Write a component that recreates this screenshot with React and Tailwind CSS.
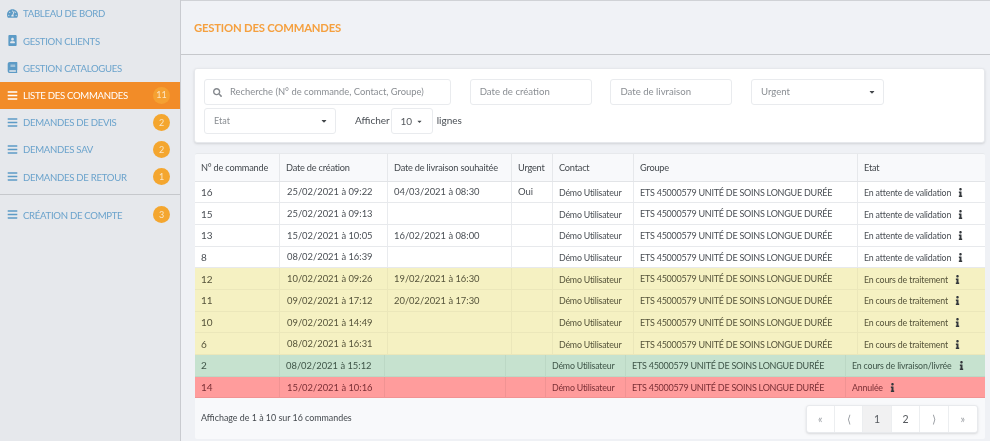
import React from 'react';
import { FaTachometerAlt, FaPortrait, FaBook, FaBars, FaInfo, FaSearch, FaCaretDown } from 'react-icons/fa';

const nav = [
  { label: 'TABLEAU DE BORD', Icon: FaTachometerAlt },
  { label: 'GESTION CLIENTS', Icon: FaPortrait },
  { label: 'GESTION CATALOGUES', Icon: FaBook },
  { label: 'LISTE DES COMMANDES', Icon: FaBars, badge: 11, active: true },
  { label: 'DEMANDES DE DEVIS', Icon: FaBars, badge: 2 },
  { label: 'DEMANDES SAV', Icon: FaBars, badge: 2 },
  { label: 'DEMANDES DE RETOUR', Icon: FaBars, badge: 1 },
];

const G = 'ETS 45000579 UNITÉ DE SOINS LONGUE DURÉE';
const rows = [
  ['16', '25/02/2021 à 09:22', '04/03/2021 à 08:30', 'Oui', 'En attente de validation', 'w'],
  ['15', '25/02/2021 à 09:13', '', '', 'En attente de validation', 'w'],
  ['13', '15/02/2021 à 10:05', '16/02/2021 à 08:00', '', 'En attente de validation', 'w'],
  ['8', '08/02/2021 à 16:39', '', '', 'En attente de validation', 'w'],
  ['12', '10/02/2021 à 09:26', '19/02/2021 à 16:30', '', 'En cours de traitement', 'y'],
  ['11', '09/02/2021 à 17:12', '20/02/2021 à 17:30', '', 'En cours de traitement', 'y'],
  ['10', '09/02/2021 à 14:49', '', '', 'En cours de traitement', 'y'],
  ['6', '08/02/2021 à 16:31', '', '', 'En cours de traitement', 'y'],
  ['2', '08/02/2021 à 15:12', '', '', 'En cours de livraison/livrée', 'g'],
  ['14', '15/02/2021 à 10:16', '', '', 'Annulée', 'r'],
];

const rowStyle = {
  w: 'bg-white border-[#e7e9ec] text-[#4a4f55] divide-[#e9ebee]',
  y: 'bg-[#f5f1c2] border-[#ebe7ba] text-[#55533a] divide-[#ebe7ba]',
  g: 'bg-[#c6e2cf] border-[#bcd8c5] text-[#3f5548] divide-[#bcd8c5]',
  r: 'bg-[#ff9c9c] border-[#f19393] text-[#7a2f35] divide-[#f19393]',
};

const wideCols = 'grid-cols-[85px_108px_124px_41px_81px_224px_1fr]';
const narrowCols = 'grid-cols-[85px_105px_121px_40px_80px_220px_1fr]';

function Cell({ children, className = '' }) {
  return <div className={`flex items-center pl-[6px] pt-[1px] overflow-hidden whitespace-nowrap ${className}`}>{children}</div>;
}

function Row({ r }) {
  const [id, created, delivery, urgent, state, kind] = r;
  const narrow = kind === 'g' || kind === 'r';
  return (
    <div className={`grid h-[21.7px] border-b divide-x ${narrow ? narrowCols : wideCols} ${rowStyle[kind]}`}>
      <Cell className="text-[10px]">{id}</Cell>
      <Cell className={`text-[9.4px] ${kind === 'g' ? 'pl-[5px]' : 'pl-[7px]'}`}>{created}</Cell>
      <Cell className="text-[9.4px]">{delivery}</Cell>
      <Cell className="text-[9.5px]">{urgent}</Cell>
      <Cell className="text-[8.8px] tracking-[-0.2px]">Démo Utilisateur</Cell>
      <Cell className="text-[9px] tracking-[-0.25px]">{G}</Cell>
      <Cell className="text-[8.8px] tracking-[-0.17px]">
        <span>{state}</span>
        <FaInfo className="ml-[5px] w-[9px] h-[9px] text-[#33373b]" />
      </Cell>
    </div>
  );
}

export default function App() {
  return (
    <div className="flex w-[990px] h-[441px] overflow-hidden bg-[#eff1f5] font-['Lato','Liberation_Sans',sans-serif] blur-[0.5px]">
      <aside className="w-[181px] shrink-0 bg-[#e6e8ec] border-r border-[#c9cbd0]">
        <nav className="flex flex-col">
          {nav.map(({ label, Icon, badge, active }) => (
            <div key={label} className={`flex items-center h-[27.2px] pl-[7px] pr-[10px] ${active ? 'bg-[#f28c28] text-white' : 'text-[#6ba3cc]'}`}>
              <Icon className={`w-[11px] h-[11px] shrink-0 ${active ? 'text-white' : 'text-[#5d9bc6]'}`} />
              <span className="ml-[5px] mt-[2px] text-[9.6px] tracking-[-0.3px] whitespace-nowrap">{label}</span>
              {badge && (
                <span className={`ml-auto w-[17px] h-[17px] rounded-full flex items-center justify-center text-[9px] text-[#fbe6c4] ${active ? 'bg-[#f5a132]' : 'bg-[#f4a62f]'}`}>{badge}</span>
              )}
            </div>
          ))}
        </nav>
        <div className="mt-[4px] pt-[6px] border-t border-[#c6c8cc]">
          <div className="flex items-center h-[27.2px] pl-[7px] pr-[10px] text-[#6ba3cc]">
            <FaBars className="w-[11px] h-[11px] shrink-0 text-[#5d9bc6]" />
            <span className="ml-[5px] mt-[2px] text-[9.6px] tracking-[-0.3px] whitespace-nowrap">CRÉATION DE COMPTE</span>
            <span className="ml-auto w-[17px] h-[17px] rounded-full flex items-center justify-center text-[9px] text-[#fbe6c4] bg-[#f4a62f]">3</span>
          </div>
        </div>
      </aside>

      <main className="flex-1 min-w-0">
        <header className="h-[55px] flex items-center pl-[13px] pt-[1px] bg-[#f0f2f6] border-b border-[#c6c8cc] border-t border-t-[#d0d2d6]">
          <h1 className="text-[11.3px] font-bold text-[#f5a03f] tracking-[-0.2px]">GESTION DES COMMANDES</h1>
        </header>

        <section className="mt-[13px] ml-[13px] mr-[5px] h-[75px] bg-white rounded-[3px] border border-[#e6e8ec] pl-[9px] pt-[10px] shadow-sm">
          <div className="flex gap-[18.7px]">
            <div className="w-[247px] h-[26px] flex items-center pl-[8px] border border-[#e9ebee] rounded-[3px] text-[9.4px] text-[#8a8e93]">
              <FaSearch className="w-[9px] h-[9px] text-[#85898e]" />
              <span className="ml-[8px] whitespace-nowrap">Recherche (N° de commande, Contact, Groupe)</span>
            </div>
            <div className="w-[122px] h-[26px] flex items-center pl-[9px] border border-[#e9ebee] rounded-[3px] text-[9.6px] text-[#8a8e93]">Date de création</div>
            <div className="w-[122px] h-[26px] flex items-center pl-[9px] border border-[#e9ebee] rounded-[3px] text-[9.6px] text-[#8a8e93]">Date de livraison</div>
            <div className="w-[133px] h-[26px] flex items-center justify-between pl-[9px] pr-[7px] border border-[#e9ebee] rounded-[3px] text-[9.6px] text-[#8a8e93]">
              Urgent <FaCaretDown className="w-[8px] h-[8px] text-[#44484c]" />
            </div>
          </div>
          <div className="flex items-center mt-[3px]">
            <div className="w-[132px] h-[26px] flex items-center justify-between pl-[9px] pr-[7px] border border-[#e9ebee] rounded-[3px] text-[9px] text-[#8a8e93]">
              Etat <FaCaretDown className="w-[8px] h-[8px] text-[#44484c]" />
            </div>
            <span className="ml-[19px] -mt-[1px] text-[10px] text-[#4a4f55]">Afficher</span>
            <div className="ml-[1px] w-[42px] h-[26px] flex items-center justify-center gap-[4px] border border-[#e9ebee] rounded-[3px] text-[10px] text-[#55595e]">
              10 <FaCaretDown className="w-[7px] h-[7px] text-[#44484c]" />
            </div>
            <span className="ml-[4px] -mt-[1px] text-[10px] text-[#4a4f55]">lignes</span>
          </div>
        </section>

        <section className="mt-[10px] ml-[14px] mr-[5px] h-[286px] bg-[#f8f9fb] rounded-[2px] border-t border-[#e7e9ec]">
          <div className={`grid h-[27.6px] divide-x divide-[#e6e8eb] border-b border-[#e2e4e7] text-[9.2px] tracking-[-0.2px] text-[#44494e] ${wideCols}`}>
            <Cell>N° de commande</Cell>
            <Cell>Date de création</Cell>
            <Cell>Date de livraison souhaitée</Cell>
            <Cell>Urgent</Cell>
            <Cell>Contact</Cell>
            <Cell>Groupe</Cell>
            <Cell>Etat</Cell>
          </div>
          {rows.map((r) => <Row key={r[0]} r={r} />)}
          <div className="flex items-start justify-between pl-[6px] pr-[7px]">
            <span className="mt-[13px] text-[8.9px] text-[#44494e]">Affichage de 1 à 10 sur 16 commandes</span>
            <div className="mt-[7px] flex h-[28px] bg-white rounded-[3px] border border-[#e8eaed] shadow-sm divide-x divide-[#eceef0] text-[10.5px] text-[#55595e]">
              {['«', '⟨', '1', '2', '⟩', '»'].map((p) => (
                <span key={p} className={`w-[28.4px] flex items-center justify-center ${p === '1' ? 'bg-[#f1f1f2]' : ''} ${p === '1' || p === '2' ? '' : 'text-[#9a9ea3]'}`}>{p}</span>
              ))}
            </div>
          </div>
        </section>
      </main>
    </div>
  );
}
